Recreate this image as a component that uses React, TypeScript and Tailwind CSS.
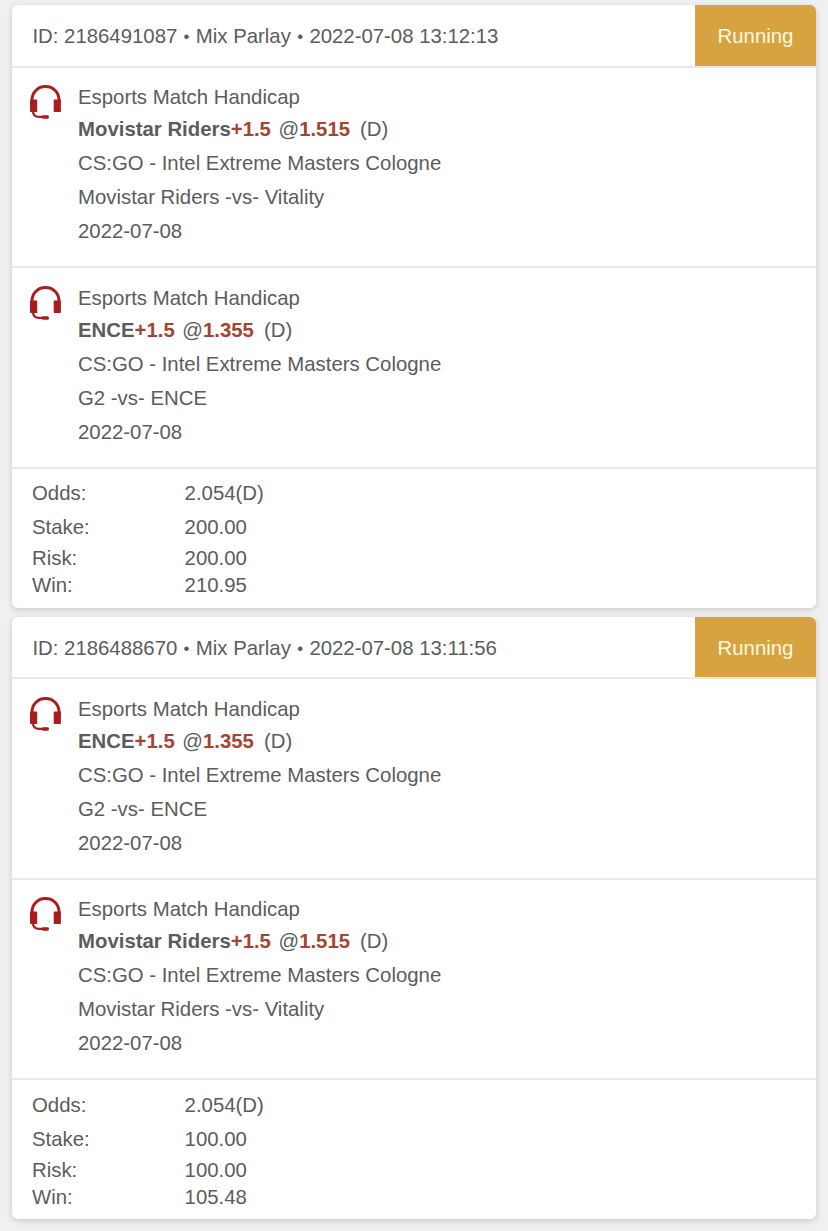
interface Leg {
  team: string;
  handicap: string;
  odds: string;
  match: string;
}

interface Bet {
  id: string;
  placedAt: string;
  legs: Leg[];
  stake: string;
  risk: string;
  win: string;
}

const LEAGUE = 'CS:GO - Intel Extreme Masters Cologne';
const MATCH_DATE = '2022-07-08';

const movistar: Leg = { team: 'Movistar Riders', handicap: '+1.5', odds: '1.515', match: 'Movistar Riders -vs- Vitality' };
const ence: Leg = { team: 'ENCE', handicap: '+1.5', odds: '1.355', match: 'G2 -vs- ENCE' };

const bets: Bet[] = [
  { id: '2186491087', placedAt: '2022-07-08 13:12:13', legs: [movistar, ence], stake: '200.00', risk: '200.00', win: '210.95' },
  { id: '2186488670', placedAt: '2022-07-08 13:11:56', legs: [ence, movistar], stake: '100.00', risk: '100.00', win: '105.48' },
];

function HeadsetIcon() {
  return (
    <svg viewBox="0 0 32 34" className="h-[34px] w-8 shrink-0" fill="none" stroke="#a91d1d">
      <path d="M2 17V15C2 7.4 7.6 1.6 15.5 1.6S29 7.4 29 15V17" strokeWidth="3" />
      <path d="M3 26C3 30.2 5 31.8 9 31.8H13" strokeWidth="2.2" />
      <rect x="0" y="14.6" width="7.2" height="12.4" rx="0.8" fill="#a91d1d" stroke="none" />
      <rect x="23.7" y="14.6" width="7.2" height="12.4" rx="0.8" fill="#a91d1d" stroke="none" />
      <rect x="12" y="30.2" width="6.8" height="3.6" rx="1" fill="#a91d1d" stroke="none" />
    </svg>
  );
}

function Dot() {
  return <span className="inline-block w-[7.2px] -translate-y-[1.5px] text-center text-[17px] leading-none">•</span>;
}

function LegRow({ leg }: { leg: Leg }) {
  return (
    <div className="flex h-[200.6px] gap-4 border-b-2 border-[#e8e8e8] pt-[13.45px] pl-[18px]">
      <div className="pt-1">
        <HeadsetIcon />
      </div>
      <div className="leading-[34px]">
        <p className="leading-8">Esports Match Handicap</p>
        <p className="leading-[33px]">
          <b>{leg.team}</b>
          <b className="text-[#a4452f]">{leg.handicap}</b>
          <span className="ml-[7.5px]">@</span>
          <b className="text-[#a4452f]">{leg.odds}</b>
          <span className="ml-[10px]">(D)</span>
        </p>
        <p>{LEAGUE}</p>
        <p>{leg.match}</p>
        <p>{MATCH_DATE}</p>
      </div>
    </div>
  );
}

function BetCard({ bet }: { bet: Bet }) {
  return (
    <div className="overflow-hidden rounded-md bg-white shadow-[0_2px_6px_rgba(0,0,0,0.16)]">
      <div className="flex h-[62.5px] justify-between border-b-2 border-[#e8e8e8] leading-[62px]">
        <span className="pl-[20.4px]">
          ID: {bet.id} <Dot /> Mix Parlay <Dot /> {bet.placedAt}
        </span>
        <span className="w-[121px] bg-[#d7a341] text-center text-[#fff8df]">Running</span>
      </div>
      {bet.legs.map((leg) => (
        <LegRow key={leg.team} leg={leg} />
      ))}
      <div className="grid grid-cols-[152.6px_1fr] grid-rows-[34px_34px_28px_26px] items-center pt-[7.3px] pb-[9.65px] pl-5">
        <span>Odds:</span>
        <span>2.054(D)</span>
        <span>Stake:</span>
        <span>{bet.stake}</span>
        <span>Risk:</span>
        <span>{bet.risk}</span>
        <span>Win:</span>
        <span>{bet.win}</span>
      </div>
    </div>
  );
}

export default function App() {
  return (
    <div className="flex min-h-screen flex-col gap-[9px] bg-[#f0f0f0] px-3 pt-[5px] font-['Liberation_Sans',Arial,sans-serif] text-[20.38px] leading-7 text-[#5c5c5c]">
      {bets.map((bet) => (
        <BetCard key={bet.id} bet={bet} />
      ))}
    </div>
  );
}
